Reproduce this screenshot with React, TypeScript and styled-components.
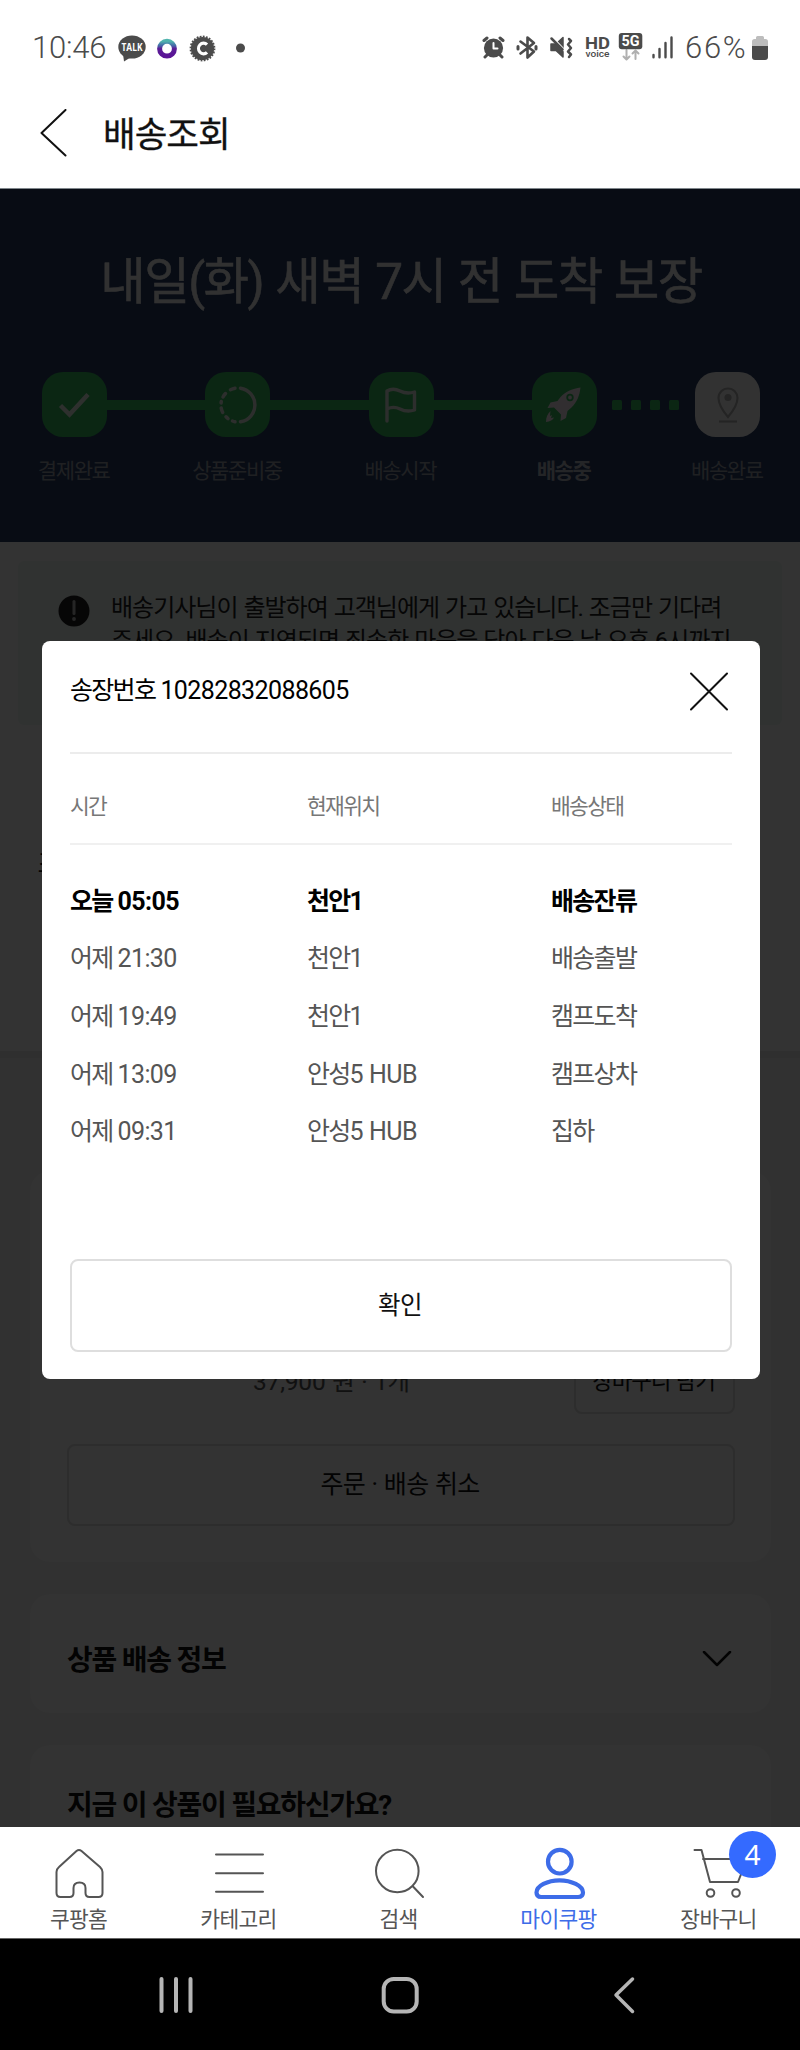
import React from 'react';
import styled, { createGlobalStyle } from 'styled-components';

const GlobalStyle = createGlobalStyle`
  *, *::before, *::after { box-sizing: border-box; }
  body { margin: 0; background: #000; }
  button { font: inherit; padding: 0; margin: 0; background: none; border: 0; color: inherit; letter-spacing: inherit; }
  h1, h2, h3, p { margin: 0; font-weight: inherit; }
  svg { display: block; flex: none; }
`;

const Screen = styled.div`
  width: 800px;
  height: 2050px;
  display: flex;
  flex-direction: column;
  background: #fff;
  color: #111;
  overflow: hidden;
  font-family: Roboto, 'Noto Sans CJK KR', sans-serif;
  white-space: nowrap;
`;

const StatusBar = styled.div`
  flex: none;
  height: 95px;
  padding: 0 32px 0 32px;
  display: flex;
  align-items: center;
  justify-content: space-between;
  color: #4b4b4b;
`;

const StatusGroup = styled.div`
  display: flex;
  align-items: center;
`;

const StatusText = styled.span<{ $spacing: number; $width: number; $indent?: number }>`
  width: ${(p) => p.$width}px;
  padding-left: ${(p) => p.$indent ?? 0}px;
  font-size: 31px;
  font-weight: 300;
  line-height: 40px;
  letter-spacing: ${(p) => p.$spacing}px;
`;

const TitleBar = styled.header`
  flex: none;
  height: 94px;
  padding: 14px 0 0 40px;
  display: flex;
  align-items: flex-start;
  gap: 35px;
  border-bottom: 1px solid #7f868b;
`;

const PageTitle = styled.h1`
  margin-top: 1px;
  font-size: 35.5px;
  line-height: 50px;
  letter-spacing: -1px;
  -webkit-text-stroke: 0.3px currentColor;
`;

const Viewport = styled.main`
  flex: none;
  position: relative;
  height: 1638px;
  overflow: hidden;
  background: #fff;
`;

const Hero = styled.section`
  height: 353px;
  padding: 59px 40px 0 42px;
  background: #283c64;
  color: #f4f4f4;
`;

const HeroTitle = styled.h2`
  height: 68px;
  line-height: 68px;
  text-align: center;
  font-size: 49.5px;
  letter-spacing: -1.6px;
  word-spacing: 1.5px;
  -webkit-text-stroke: 0.5px currentColor;
`;

const Track = styled.div`
  display: flex;
  align-items: center;
  margin-top: 56px;
`;

const StepBox = styled.div<{ $pending?: boolean }>`
  flex: none;
  width: 65px;
  height: 65px;
  border-radius: 21px;
  display: flex;
  align-items: center;
  justify-content: center;
  background: ${(p) => (p.$pending ? '#fafafa' : '#37be5f')};
`;

const Connector = styled.div`
  flex: 1;
  height: 10px;
  background: #37be5f;
`;

const DottedConnector = styled.div`
  flex: 1;
  display: flex;
  justify-content: center;
  gap: 9px;
`;

const Dot = styled.i`
  width: 10px;
  height: 10px;
  border-radius: 1.5px;
  background: #37be5f;
`;

const StepLabels = styled.div`
  display: grid;
  grid-template-columns: repeat(5, 163.3px);
  margin: 19px -49px 0 -50px;
`;

const StepLabel = styled.span<{ $current?: boolean }>`
  text-align: center;
  font-size: 21px;
  line-height: 30px;
  letter-spacing: -1.4px;
  font-weight: ${(p) => (p.$current ? 700 : 400)};
  color: ${(p) => (p.$current ? '#b4b9c3' : '#9ba0aa')};
`;

const Summary = styled.section`
  height: 509px;
  padding: 19px 18px 0;
  background: #fff;
`;

const Notice = styled.div`
  height: 164px;
  padding: 31px 40px;
  display: flex;
  gap: 21px;
  border-radius: 6px;
  background: #f0f8f5;

  svg { margin-top: 3px; }
`;

const NoticeText = styled.p`
  font-size: 24px;
  line-height: 33px;
  letter-spacing: -1px;
  word-spacing: 1px;
  color: #222;
`;

const Recipient = styled.p`
  margin: 121px 0 0 19.5px;
  font-size: 26px;
  line-height: 36px;
`;

const Orders = styled.section`
  border-top: 7px solid #ebebeb;
  padding: 113px 29px 0 30px;
  display: flex;
  flex-direction: column;
  gap: 32px;
  background: #f2f2f2;
`;

const Card = styled.article<{ $height: number }>`
  height: ${(p) => p.$height}px;
  border-radius: 20px;
  background: #fcfcfc;
  padding: 0 36px 0 37px;
  display: flex;
  flex-direction: column;
`;

const ProductRow = styled.div`
  flex: none;
  display: flex;
  align-items: flex-end;
  justify-content: space-between;
  padding-left: 186px;
  margin-top: 173px;
`;

const Price = styled.span`
  font-size: 24.5px;
  line-height: 34px;
  letter-spacing: -0.2px;
  word-spacing: 0.8px;
  color: #555;
  margin-bottom: 15px;
`;

const OutlineButton = styled.button<{ $width?: number; $height: number; $size?: number; $spacing: number; $lift?: number }>`
  flex: none;
  width: ${(p) => (p.$width ? `${p.$width}px` : '100%')};
  height: ${(p) => p.$height}px;
  padding: 0 2px ${(p) => p.$lift ?? 0}px 0;
  border: 2px solid #dedede;
  border-radius: 8px;
  font-size: ${(p) => p.$size ?? 24}px;
  letter-spacing: ${(p) => p.$spacing}px;
  word-spacing: 1px;
`;

const CancelRow = styled.div`
  margin-top: 30px;
`;

const CardHeading = styled.div<{ $top: number }>`
  padding: ${(p) => p.$top}px 3px 0 0;
  display: flex;
  justify-content: space-between;
  align-items: center;
  font-size: 28px;
  line-height: 40px;
  font-weight: 700;
  letter-spacing: -1.25px;

  svg { margin-top: -3px; }
`;

const Backdrop = styled.div`
  position: absolute;
  inset: 0;
  padding: 452px 40px 0 42px;
  background: rgba(0, 0, 0, 0.8);
`;

const Dialog = styled.div`
  height: 738px;
  padding: 0 28px 27px;
  display: flex;
  flex-direction: column;
  border-radius: 8px;
  background: #fff;
`;

const DialogHeader = styled.div`
  flex: none;
  height: 113px;
  display: flex;
  align-items: flex-start;
  justify-content: space-between;
  padding: 30px 3px 0 0;
  border-bottom: 2px solid #ececec;
`;

const DialogTitle = styled.h3`
  font-size: 25px;
  line-height: 40px;
  letter-spacing: -1.7px;
  word-spacing: 0.7px;
  color: #000;
`;

const Latin = styled.span`
  letter-spacing: -0.6px;
`;

const Row = styled.div<{ $kind?: 'head' | 'current' }>`
  flex: none;
  height: ${(p) => (p.$kind === 'head' ? 91 : 57.6)}px;
  display: grid;
  grid-template-columns: 237px 244px 1fr;
  align-items: center;
  font-size: ${(p) => (p.$kind === 'head' ? 21.5 : 25)}px;
  letter-spacing: -1.7px;
  word-spacing: 0.4px;
  font-weight: ${(p) => (p.$kind === 'current' ? 700 : 400)};
  color: ${(p) => (p.$kind === 'head' ? '#777' : p.$kind === 'current' ? '#000' : '#555')};
  ${(p) => (p.$kind === 'head' ? 'padding-top: 12px; border-bottom: 2px solid #f0f0f0;' : '')}
`;

const Rows = styled.div`
  flex: 1;
  padding-top: 25px;
`;

const TabBar = styled.nav`
  flex: none;
  height: 112px;
  display: grid;
  grid-template-columns: repeat(5, 160px);
  background: #fff;
  border-bottom: 1px solid #666;
`;

const Tab = styled.a<{ $active?: boolean }>`
  position: relative;
  display: flex;
  flex-direction: column;
  align-items: center;
  padding: 18px 1px 0 0;
  color: ${(p) => (p.$active ? '#3d6ce8' : '#555')};
`;

const TabLabel = styled.span`
  margin: 4px 2px 0 0;
  font-size: 21.5px;
  line-height: 30px;
  letter-spacing: -0.7px;
`;

const Badge = styled.span`
  position: absolute;
  left: 89px;
  top: 4px;
  width: 47px;
  height: 47px;
  border-radius: 50%;
  background: #346aff;
  color: #fff;
  font: 400 28px/47px 'Noto Sans', sans-serif;
  text-align: center;
`;

const SystemBar = styled.footer`
  flex: 1;
  background: #000;
`;

const StatusLeftIcons = () => (
  <svg width="132" height="34" viewBox="114 30 132 34">
    <ellipse cx="132" cy="46" rx="13.7" ry="11.6" fill="#4b4b4b" />
    <path d="M123 53l1 7.5 8-5z" fill="#4b4b4b" />
    <text x="132" y="50.2" textAnchor="middle" fontFamily="Open Sans" fontWeight="700" fontSize="10.5" textLength="21" lengthAdjust="spacingAndGlyphs" fill="#fff">TALK</text>
    <defs>
      <linearGradient id="ring" x1="0" y1="0" x2="0" y2="1">
        <stop offset="0" stopColor="#4fb3ad" />
        <stop offset="0.3" stopColor="#4666a8" />
        <stop offset="0.5" stopColor="#5a1c96" />
        <stop offset="1" stopColor="#5a1496" />
      </linearGradient>
    </defs>
    <circle cx="167" cy="47.7" r="7.4" fill="none" stroke="url(#ring)" strokeWidth="5" />
    <circle cx="202.5" cy="47.5" r="11.6" fill="#4b4b4b" />
    <circle cx="202.5" cy="47.5" r="12" fill="none" stroke="#4b4b4b" strokeWidth="1.8" strokeDasharray="1.8 1.34" />
    <path d="M207 43.6a5 5.4 0 1 0 0 7.8" fill="none" stroke="#fff" strokeWidth="3.2" />
    <circle cx="240.5" cy="47" r="4.5" fill="#4b4b4b" />
  </svg>
);

const StatusRightIcons = () => (
  <svg width="194" height="34" viewBox="482 30 194 34">
    <g fill="none" stroke="#4b4b4b" strokeLinecap="round" strokeLinejoin="round">
      <circle cx="493.5" cy="47" r="9.6" fill="#4b4b4b" stroke="none" />
      <path d="M493.5 42v5.5h4" stroke="#fff" strokeWidth="2" />
      <path d="M484 39.5l3-2.5M503 39.5l-3-2.5M487.5 53.5l-2.5 2.5M499.5 53.5l2.5 2.5" strokeWidth="3" />
      <path d="M520.5 40.5l13.5 10-6.5 6V36.5l6.5 5.5-13.5 10.5" strokeWidth="2.6" />
      <path d="M518 45.5v2.5M536 45.5v2.5" strokeWidth="3" />
      <path d="M551 43h5l7-6.5V56l-7-6.5h-5z" fill="#4b4b4b" strokeWidth="1.5" />
      <path d="M550 34l16 17" stroke="#fff" strokeWidth="2.5" />
      <path d="M551.5 37.5l11 11" strokeWidth="2.5" />
      <path d="M569 38l2 2-3 3.5 3 3.5-3 3.5 3 3-2 2.5" strokeWidth="2.5" />
      <path d="M653.5 54v2.2M659.5 48v8.2M665.5 42v14.2M671.5 36.5v19.7" strokeWidth="2.4" />
      <path d="M626.5 49v9M623.5 55.5l3 3 3-3M635.5 58v-8M632.5 52.5l3-3 3 3" stroke="#b0b0b0" strokeWidth="2" />
    </g>
    <rect x="618.8" y="32" width="23.5" height="16.2" rx="3" fill="#4b4b4b" />
    <g fontFamily="Roboto" fontWeight="700">
      <text x="630.5" y="45.3" textAnchor="middle" fontSize="14.5" textLength="18" lengthAdjust="spacingAndGlyphs" fill="#fff">5G</text>
      <text x="585" y="48" fontSize="16" textLength="25" lengthAdjust="spacingAndGlyphs" fill="#4b4b4b">HD</text>
      <text x="585.5" y="56" fontSize="9.5" fontWeight="500" textLength="24" lengthAdjust="spacingAndGlyphs" fill="#4b4b4b">voice</text>
    </g>
  </svg>
);

const BatteryIcon = () => (
  <svg width="16" height="24" viewBox="0 0 16 24">
    <path d="M0 10V5.5A2.5 2.5 0 0 1 2.5 3H4V1.5A1.5 1.5 0 0 1 5.5 0h5A1.5 1.5 0 0 1 12 1.5V3h1.5A2.5 2.5 0 0 1 16 5.5V10z" fill="#bdbdbd" />
    <path d="M0 10h16v11a3 3 0 0 1-3 3H3a3 3 0 0 1-3-3z" fill="#4b4b4b" />
  </svg>
);

const CheckIcon = () => (
  <svg width="44" height="44" viewBox="0 0 44 44" fill="none" stroke="#e6eee6" strokeWidth="4.5">
    <path d="M7.5 22.5l9 9 18.5-20" />
  </svg>
);

const ProgressIcon = () => (
  <svg width="44" height="44" viewBox="0 0 44 44" fill="none" stroke="#dfe6df" strokeWidth="3.5" strokeLinecap="round">
    <path d="M24.5 5.2a17 17 0 0 1 0 33.6" />
    <path d="M19 5.2a17 17 0 0 0-4.500 1.500M9.500 10.500a17 17 0 0 0-2.500 3.500M5.300 18.500a17 17 0 0 0-.2 1.500M5.200 25a17 17 0 0 0 1.500 4.500M10 33.800a17 17 0 0 0 2 1.800M16.500 38a17 17 0 0 0 2.500.8" />
  </svg>
);

const FlagIcon = () => (
  <svg width="44" height="44" viewBox="0 0 44 44" fill="none" stroke="#dfe6df" strokeWidth="3.4" strokeLinecap="round" strokeLinejoin="round">
    <path d="M8 38V8c5-3 9-2 13 0s8 3 14.5 1v18c-6 2-10.5 1-14.5-1s-8-2.5-13 0" />
  </svg>
);

const RocketIcon = () => (
  <svg width="44" height="44" viewBox="0 0 44 44">
    <path d="M38.5 4.5c-8 1-14.5 4-20 9.500l-3 4-7 1.500-3 5.500 6.500-.5 7 7-.5 6.500 5.500-3 1.500-7 4-3.500c5.500-5.500 8-11.500 9-20z" fill="#f2e6ee" />
    <circle cx="28" cy="14.5" r="2.8" fill="none" stroke="#37be5f" strokeWidth="1.8" />
    <path d="M8.5 28c-3 3-4.500 6-4.500 11 4-.5 7-2 8-4.500l-3 .5 1-3-2 1z" fill="#f2e6ee" />
  </svg>
);

const PinIcon = () => (
  <svg width="44" height="44" viewBox="0 0 44 44" fill="none" stroke="#b4b4b4" strokeWidth="2.2">
    <path d="M22 34C16 27 12.5 21 12.5 15a9.5 9.5 0 0 1 19 0c0 6-3.500 12-9.500 19z" />
    <circle cx="22" cy="14.5" r="2.5" fill="#b4b4b4" />
    <path d="M13 38.500h18" />
  </svg>
);

const InfoIcon = () => (
  <svg width="32" height="32" viewBox="0 0 32 32">
    <circle cx="16" cy="16" r="15.5" fill="#222" />
    <path d="M16 6.5v12" stroke="#bbb" strokeWidth="3" strokeLinecap="round" />
    <circle cx="16" cy="24" r="1.9" fill="#bbb" />
  </svg>
);

const history = [
  ['어제', '21:30', '천안', '1', '배송출발'],
  ['어제', '19:49', '천안', '1', '캠프도착'],
  ['어제', '13:09', '안성', '5 HUB', '캠프상차'],
  ['어제', '09:31', '안성', '5 HUB', '집하'],
];

const line = { fill: 'none', stroke: 'currentColor', strokeWidth: 2, strokeLinecap: 'round', strokeLinejoin: 'round' } as const;

export default function App() {
  return (
    <>
      <GlobalStyle />
      <Screen>
        <StatusBar>
          <StatusGroup>
            <StatusText $width={82} $spacing={-0.2}>10:46</StatusText>
            <StatusLeftIcons />
          </StatusGroup>
          <StatusGroup>
            <StatusRightIcons />
            <StatusText $width={76} $indent={9} $spacing={1.7}>66%</StatusText>
            <BatteryIcon />
          </StatusGroup>
        </StatusBar>
        <TitleBar>
          <svg width="28" height="50" viewBox="0 0 28 50" fill="none" stroke="#111" strokeWidth="2" strokeLinecap="round" strokeLinejoin="round">
            <path d="M25.5 1L1.500 24l24 22.500" />
          </svg>
          <PageTitle>배송조회</PageTitle>
        </TitleBar>

        <Viewport>
          <Hero>
            <HeroTitle>내일(화) 새벽 7시 전 도착 보장</HeroTitle>
            <Track>
              <StepBox><CheckIcon /></StepBox>
              <Connector />
              <StepBox><ProgressIcon /></StepBox>
              <Connector />
              <StepBox><FlagIcon /></StepBox>
              <Connector />
              <StepBox><RocketIcon /></StepBox>
              <DottedConnector><Dot /><Dot /><Dot /><Dot /></DottedConnector>
              <StepBox $pending><PinIcon /></StepBox>
            </Track>
            <StepLabels>
              <StepLabel>결제완료</StepLabel>
              <StepLabel>상품준비중</StepLabel>
              <StepLabel>배송시작</StepLabel>
              <StepLabel $current>배송중</StepLabel>
              <StepLabel>배송완료</StepLabel>
            </StepLabels>
          </Hero>
          <Summary>
            <Notice>
              <InfoIcon />
              <NoticeText>
                배송기사님이 출발하여 고객님에게 가고 있습니다. 조금만 기다려<br />
                주세요. 배송이 지연되면 죄송한 마음을 담아 다음 날 오후 6시까지
              </NoticeText>
            </Notice>
            <Recipient>조</Recipient>
          </Summary>
          <Orders>
            <Card $height={391}>
              <ProductRow>
                <Price>37,900 원 · 1개</Price>
                <OutlineButton $width={161} $height={70} $size={22.5} $spacing={-1.2}>장바구니 담기</OutlineButton>
              </ProductRow>
              <CancelRow>
                <OutlineButton $height={82} $size={25} $spacing={-0.7} $lift={7}>주문 · 배송 취소</OutlineButton>
              </CancelRow>
            </Card>
            <Card $height={119}>
              <CardHeading $top={47}>
                상품 배송 정보
                <svg width="30" height="18" viewBox="0 0 30 18" fill="none" stroke="#111" strokeWidth="2.5" strokeLinecap="round" strokeLinejoin="round">
                  <path d="M2 1l13 13L28 1" />
                </svg>
              </CardHeading>
            </Card>
            <Card $height={140}>
              <CardHeading $top={41}>지금 이 상품이 필요하신가요?</CardHeading>
            </Card>
          </Orders>

          <Backdrop>
            <Dialog role="dialog">
              <DialogHeader>
                <DialogTitle>송장번호 <Latin>10282832088605</Latin></DialogTitle>
                <svg width="40" height="40" viewBox="0 0 40 40" fill="none" stroke="#111" strokeWidth="2" strokeLinecap="round">
                  <path d="M2 2.500l36 36M38 2.500l-36 36" />
                </svg>
              </DialogHeader>
              <Row $kind="head"><span>시간</span><span>현재위치</span><span>배송상태</span></Row>
              <Rows>
                <Row $kind="current">
                  <span>오늘 <Latin>05:05</Latin></span>
                  <span>천안<Latin>1</Latin></span>
                  <span>배송잔류</span>
                </Row>
                {history.map(([day, time, place, suffix, state]) => (
                  <Row key={time}>
                    <span>{day} <Latin>{time}</Latin></span>
                    <span>{place}<Latin>{suffix}</Latin></span>
                    <span>{state}</span>
                  </Row>
                ))}
              </Rows>
              <OutlineButton $height={93} $size={24.5} $spacing={-0.5} $lift={4}>확인</OutlineButton>
            </Dialog>
          </Backdrop>
        </Viewport>

        <TabBar>
          <Tab>
            <svg width="56" height="56" viewBox="52 1845 56 56" {...line}>
              <path d="M76.500 1851q2.500-2 5 0l18.500 16q2.500 2.500 2.500 5v21q0 4-4 4h-9q-4 0-4-4v-5q0-5.500-6-5.500-6 0-6 5.500v5q0 4-4 4h-9q-4 0-4-4v-21q0-3 2.500-5z" />
            </svg>
            <TabLabel>쿠팡홈</TabLabel>
          </Tab>
          <Tab>
            <svg width="56" height="56" viewBox="212 1845 56 56" {...line}>
              <path d="M216 1854.500h47M216 1873.300h47M216 1891.800h47" />
            </svg>
            <TabLabel>카테고리</TabLabel>
          </Tab>
          <Tab>
            <svg width="56" height="56" viewBox="372 1845 56 56" {...line}>
              <circle cx="397.300" cy="1871" r="21.300" />
              <path d="M413 1886.500l10 10.500" />
            </svg>
            <TabLabel>검색</TabLabel>
          </Tab>
          <Tab $active>
            <svg width="56" height="56" viewBox="532 1845 56 56" {...line} strokeWidth={4.2}>
              <circle cx="559.800" cy="1861.700" r="11.800" />
              <path d="M541 1897q-4.500 0-4.500-4.500c0-6.500 11-12.200 23-12.200s23.500 5.700 23.500 12.200q0 4.500-5 4.500z" />
            </svg>
            <TabLabel>마이쿠팡</TabLabel>
          </Tab>
          <Tab>
            <svg width="56" height="56" viewBox="692 1845 56 56" {...line}>
              <path d="M694.500 1850h7l8.500 32h28l9-23h-44" />
              <circle cx="710.500" cy="1893" r="3.800" />
              <circle cx="736" cy="1893" r="3.800" />
            </svg>
            <TabLabel>장바구니</TabLabel>
            <Badge>4</Badge>
          </Tab>
        </TabBar>
        <SystemBar>
          <svg width="800" height="111" viewBox="0 1939 800 111" fill="none" stroke="#b5b5b5" strokeWidth="4" strokeLinecap="round" strokeLinejoin="round">
            <path d="M161.500 1979v32M176 1979v32M190.500 1979v32" />
            <rect x="383.700" y="1979" width="33" height="32.500" rx="10" />
            <path d="M632.500 1979L616 1995l16.500 16.500" strokeWidth="3.5" />
          </svg>
        </SystemBar>
      </Screen>
    </>
  );
}
